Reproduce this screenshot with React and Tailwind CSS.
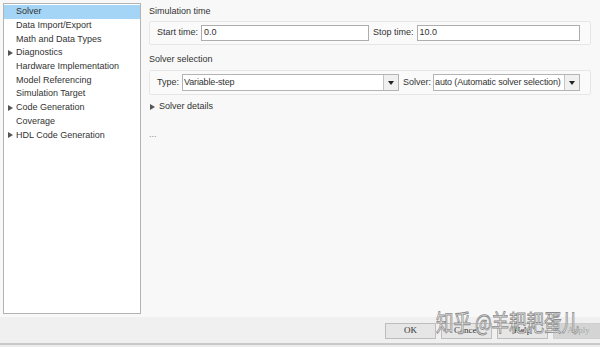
import React from "react";

const treeItems = [
  { label: "Solver", selected: true },
  { label: "Data Import/Export" },
  { label: "Math and Data Types" },
  { label: "Diagnostics", arrow: true },
  { label: "Hardware Implementation" },
  { label: "Model Referencing" },
  { label: "Simulation Target" },
  { label: "Code Generation", arrow: true },
  { label: "Coverage" },
  { label: "HDL Code Generation", arrow: true },
];

const Caret = () => (
  <svg width="5" height="6" viewBox="0 0 5 6" className="shrink-0">
    <path d="M0 0 L5 3 L0 6 Z" fill="#555" />
  </svg>
);

const DropButton = () => (
  <div className="w-[15px] h-full shrink-0 flex items-center justify-center border-l border-[#c4c4c4] bg-[#f0f0f0]">
    <svg width="6" height="4" viewBox="0 0 6 4">
      <path d="M0 0 L6 0 L3 4 Z" fill="#222" />
    </svg>
  </div>
);

const Field = ({ value, className }) => (
  <div className={`h-[16px] min-w-0 bg-white border border-[#adadad] flex items-center px-[2px] ${className}`}>
    <span className="text-[9px] text-[#333]">{value}</span>
  </div>
);

const Select = ({ value, className }) => (
  <div className={`h-[17px] min-w-0 bg-white border border-[#b4b4b4] flex items-center ${className}`}>
    <span className="flex-1 min-w-0 px-[1px] text-[9px] tracking-[-0.15px] text-[#333] whitespace-nowrap overflow-hidden">{value}</span>
    <DropButton />
  </div>
);

const Btn = ({ label, disabled }) => (
  <div
    className={`w-[51px] h-[16px] shrink-0 flex items-center justify-center border text-[9px] font-['Liberation_Serif',serif] ${
      disabled ? "bg-[#d4d4d4] border-[#cfcfcf] text-[#a8a8a8]" : "bg-[#e6e6e6] border-[#bdbdbd] text-[#333]"
    }`}
  >
    {label}
  </div>
);

export default function App() {
  return (
    <div className="w-[600px] h-[347px] overflow-hidden bg-[#f8f8f8] flex flex-col font-['Liberation_Sans',Arial,sans-serif] relative">
      <div className="flex h-[317px]">
        {/* tree */}
        <div className="pl-[3px] pt-[3px] pb-[3px] w-[141px] shrink-0">
          <div className="h-[311px] bg-white border border-[#b3b3b3] py-[1px]">
            {treeItems.map((it) => (
              <div
                key={it.label}
                className={`h-[13.7px] flex items-center text-[9px] text-[#333] ${it.selected ? "bg-[#a5d5f6]" : ""}`}
              >
                <div className="w-[12px] pl-[4px] flex items-center">{it.arrow && <Caret />}</div>
                <span className="leading-none">{it.label}</span>
              </div>
            ))}
          </div>
        </div>

        {/* settings */}
        <div className="flex-1 min-w-0 pl-[8px] pr-[9px] pt-[6px] text-[9px] text-[#333]">
          <div className="h-[12px] flex items-center">Simulation time</div>
          <div className="mt-[3px] h-[24px] border border-[#e6e6e6] rounded-[2px] bg-[#fafafa] flex items-center pl-[7px] pr-[10px]">
            <span className="mr-[3px] whitespace-nowrap">Start time:</span>
            <Field value="0.0" className="w-[168px]" />
            <span className="ml-[4px] mr-[3px] whitespace-nowrap">Stop time:</span>
            <Field value="10.0" className="flex-1" />
          </div>

          <div className="mt-[9px] h-[12px] flex items-center">Solver selection</div>
          <div className="mt-[4px] h-[25px] border border-[#e6e6e6] rounded-[2px] bg-[#fafafa] flex items-center pl-[7px] pr-[10px]">
            <span className="mr-[3px]">Type:</span>
            <Select value="Variable-step" className="w-[217px]" />
            <span className="ml-[4px] mr-[2px]">Solver:</span>
            <Select value="auto (Automatic solver selection)" className="flex-1" />
          </div>

          <div className="mt-[5px] h-[14px] flex items-center gap-[4px] pl-[1px]">
            <Caret />
            <span>Solver details</span>
          </div>

          <div className="mt-[16px] text-[#888] text-[9px] leading-none">...</div>
        </div>
      </div>

      {/* bottom bar */}
      <div className="h-[26px] bg-[#f0f0f0] flex items-center justify-end gap-[5px] pt-[1px] mr-[-4px]">
        <Btn label="OK" />
        <Btn label="Cancel" />
        <Btn label="Help" />
        <Btn label="Apply" disabled />
      </div>
      <div className="h-[4px] border-t-2 border-[#c9c9c9] bg-[#ececec]" />

      {/* watermark */}
      <div className="absolute left-[436px] top-[310px] text-[17.5px] text-white font-['Noto_Sans_CJK_SC',sans-serif] [-webkit-text-stroke:0.7px_#8c8c8c] whitespace-nowrap leading-none scale-y-130 origin-top-left">
        知乎 @羊耙耙蛋儿
      </div>
    </div>
  );
}
